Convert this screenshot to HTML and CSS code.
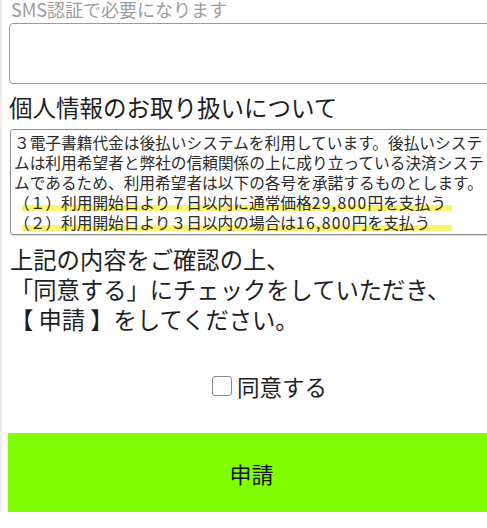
FILE: index.html
```html
<!DOCTYPE html>
<html lang="ja">
<head>
<meta charset="utf-8">
<title>申請</title>
<link rel="stylesheet" href="styles.css">
</head>
<body>
<div class="page">
  <div class="sms-label">SMS認証で必要になります</div>
  <input class="text-input" type="text">
  <h2 class="heading">個人情報のお取り扱いについて</h2>
  <div class="terms">
    <div class="line">３電子書籍代金は後払いシステムを利用しています。後払いシステ</div>
    <div class="line">ムは利用希望者と弊社の信頼関係の上に成り立っている決済システ</div>
    <div class="line">ムであるため、利用希望者は以下の各号を承諾するものとします。</div>
    <div class="line hl">（１）利用開始日より７日以内に通常価格<span class="num">29,800</span>円を支払う</div>
    <div class="line hl">（２）利用開始日より３日以内の場合は<span class="num">16,800</span>円を支払う</div>
  </div>
  <p class="notice">上記の内容をご確認の上、<br>「同意する」にチェックをしていただき、<br>【 申請 】をしてください。</p>
  <label class="agree"><input class="cb" type="checkbox"><span>同意する</span></label>
  <button class="submit" type="button">申請</button>
</div>
</body>
</html>
```
FILE: styles.css
```css
html, body {
  margin: 0;
  padding: 0;
  background: #fff;
  overflow: hidden;
}
body {
  font-family: "Noto Sans CJK JP", "Noto Sans", sans-serif;
  color: #222;
}
.page {
  width: 486px;
  border-left: 2px solid #ececec;
  padding-left: 7px;
  display: flex;
  flex-direction: column;
  align-items: stretch;
}
.sms-label {
  font-size: 18px;
  line-height: 18px;
  color: #9c9c9c;
  padding-left: 2px;
}
.text-input {
  box-sizing: border-box;
  margin: 5px 0 0 0;
  height: 61px;
  width: 100%;
  border: 1px solid #9a9a9a;
  border-radius: 4px;
  background: #fff;
}
.heading {
  margin: 8px 0 0 0;
  font-size: 23.5px;
  line-height: 30px;
  font-weight: normal;
  color: #1e1e1e;
}
.terms {
  margin-top: 7px;
  margin-left: 1px;
  border: 1px solid #8c8c8c;
  border-radius: 3px;
  padding: 3px 0 1px 3px;
  font-size: 15.7px;
  line-height: 20px;
  color: #2a2a2a;
  box-shadow: 0 1px 1px rgba(0,0,0,0.15);
}
.line {
  white-space: nowrap;
}
.num {
  letter-spacing: 1.3px;
}
.hl {
  background-image: linear-gradient(#fcf46a, #fcf46a);
  background-repeat: no-repeat;
  background-size: 430px 6px;
  background-position: 8px 12px;
}
.notice {
  margin: 9px 0 0 0;
  font-size: 23.3px;
  line-height: 30px;
  color: #1e1e1e;
  padding-left: 1px;
}
.agree {
  margin-top: 37px;
  height: 30px;
  display: flex;
  align-items: center;
  justify-content: center;
  padding-left: 35px;
  font-size: 22.5px;
  color: #1e1e1e;
}
.cb {
  appearance: none;
  -webkit-appearance: none;
  box-sizing: border-box;
  width: 20px;
  height: 20px;
  margin: 0 5px 0 0;
  border: 1.5px solid #8a8a8a;
  border-radius: 3px;
  background: #fff;
}
.submit {
  margin: 32px 0 0 -1px;
  height: 79px;
  border: none;
  background: #7fff00;
  font-family: "Noto Sans CJK JP", "Noto Sans", sans-serif;
  font-size: 22px;
  color: #111;
  box-shadow: 0 0 1px rgba(0,0,0,0.1);
}
```
